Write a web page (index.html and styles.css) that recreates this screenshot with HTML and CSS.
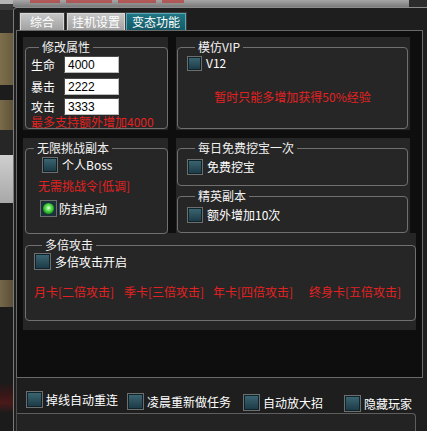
FILE: index.html
```html
<!DOCTYPE html>
<html>
    <head>
        <meta charset="utf-8" />
        <title>变态功能</title>
        <link rel="stylesheet" href="styles.css">
    </head>

    <body>
        <div class="screen">
            <!-- 左侧游戏画面 -->
            <div class="scene">
                <i class="s1"></i><i class="s2"></i><i class="s3"></i><i class="s4"></i><i class="s5"></i>
                <i class="s6"></i><i class="s7"></i><i class="s8"></i><i class="s9"></i><i class="s10"></i>
                <i class="s11"></i><i class="s12"></i>
            </div>

            <div class="main">
                <div class="topbar">
                    <span class="smear w1"></span><span class="smear w2"></span><span class="smear w3"></span>
                    <span class="smear w4"></span><span class="fill"></span><span class="topend"></span>
                </div>

                <div class="window">
                    <div class="tabs">
                        <span class="tab t1">综合</span>
                        <span class="tab t2">挂机设置</span>
                        <span class="tab t3 curr">变态功能</span>
                    </div>

                    <div class="panel">
                        <div class="row row1">
                            <div class="col col-l">
                                <fieldset class="grp g-attr">
                                    <legend>修改属性</legend>
                                    <div class="field f1"><label>生命</label><input type="text" value="4000" readonly></div>
                                    <div class="field f2"><label>暴击</label><input type="text" value="2222" readonly></div>
                                    <div class="field f3"><label>攻击</label><input type="text" value="3333" readonly></div>
                                    <p class="red">最多支持额外增加4000</p>
                                </fieldset>
                            </div>
                            <div class="col col-r">
                                <fieldset class="grp g-vip">
                                    <legend>模仿VIP</legend>
                                    <div class="chk"><span class="box"></span>V12</div>
                                    <p class="red tip">暂时只能多增加获得50%经验</p>
                                </fieldset>
                            </div>
                        </div>

                        <div class="row row2">
                            <div class="col col-l">
                                <fieldset class="grp g-boss">
                                    <legend>无限挑战副本</legend>
                                    <div class="chk"><span class="box"></span>个人Boss</div>
                                    <p class="red">无需挑战令[低调]</p>
                                    <div class="chk radio"><span class="led"><span class="dot"></span></span>防封启动</div>
                                </fieldset>
                            </div>
                            <div class="col col-r">
                                <fieldset class="grp g-dig">
                                    <legend>每日免费挖宝一次</legend>
                                    <div class="chk"><span class="box"></span>免费挖宝</div>
                                </fieldset>
                                <fieldset class="grp g-elite">
                                    <legend>精英副本</legend>
                                    <div class="chk"><span class="box"></span>额外增加10次</div>
                                </fieldset>
                            </div>
                        </div>

                        <div class="row3">
                            <fieldset class="grp g-multi">
                                <legend>多倍攻击</legend>
                                <div class="chk"><span class="box"></span>多倍攻击开启</div>
                                <p class="red cards">
                                    <span class="c1">月卡[二倍攻击]</span><span class="c2">季卡[三倍攻击]</span><span class="c3">年卡[四倍攻击]</span><span class="c4">终身卡[五倍攻击]</span>
                                </p>
                            </fieldset>
                        </div>
                    </div>

                    <div class="bottom">
                        <div class="options">
                            <div class="chk opt o1"><span class="box"></span>掉线自动重连</div>
                            <div class="chk opt o2"><span class="box"></span>凌晨重新做任务</div>
                            <div class="chk opt o3"><span class="box"></span>自动放大招</div>
                            <div class="chk opt o4"><span class="box"></span>隐藏玩家</div>
                        </div>
                        <div class="lower"></div>
                    </div>
                </div>
            </div>
        </div>
    </body>
</html>
```

FILE: styles.css
```css
*{margin:0;padding:0;box-sizing:border-box;}
body{width:427px;height:431px;overflow:hidden;background:#1a1a1a;color:#fff;font:12px/14px "Noto Sans CJK SC","Liberation Sans",sans-serif;}

.screen{display:flex;height:431px;}

/* 左侧背景 */
.scene{width:13px;flex:none;display:flex;flex-direction:column;}
.scene i{display:block;}
.scene .s1{height:4px;background:#b4b4b4;}
.scene .s2{height:6px;background:#3a3a3a;}
.scene .s3{height:23px;background:#262626;}
.scene .s4{height:52px;background:linear-gradient(90deg,#7d6e4c,#6a5d40);}
.scene .s5{height:15px;background:#1c1c1c;}
.scene .s6{height:30px;background:linear-gradient(90deg,#7a6b49,#5e5238);}
.scene .s7{height:25px;background:#262626;}
.scene .s8{height:48px;background:linear-gradient(#cfcfcf,#a8a8a8);}
.scene .s9{height:77px;background:#1d1d1d;}
.scene .s10{height:27px;background:linear-gradient(90deg,#75674a,#5a4f39);}
.scene .s11{height:76px;background:#1b1b1b;}
.scene .s12{height:48px;background:linear-gradient(#1b1b1b 0,#3a1616 12px,#4a1a1a 20px,#1b1b1b 30px);}

.main{flex:1;min-width:0;display:flex;flex-direction:column;}
.topbar{height:7px;display:flex;align-items:flex-start;padding-left:17px;background:linear-gradient(#a6a6a6,#7a7a7a);}
.topbar .smear{height:3px;margin-right:6px;background:#b83a3a;opacity:.7;}
.topbar .w1{width:30px;}
.topbar .w2{width:46px;}
.topbar .w3{width:38px;}
.topbar .w4{width:22px;}
.topbar .fill{flex:1;}
.topbar .topend{width:18px;height:7px;background:#2c2c2c;}

.window{flex:1;display:flex;flex-direction:column;border-top:1px solid #8c8c8c;border-left:1px solid #7a7a7a;border-top-left-radius:4px;background:#1e1e1e;padding-left:2px;}

/* 选项卡 */
.tabs{display:flex;height:17px;margin-top:5px;padding-left:4px;}
.tab{height:17px;border:1px solid #d8d8d8;border-bottom:none;background:linear-gradient(#c6c6c6,#a2a2a2);text-align:center;line-height:15px;box-shadow:0 0 0 1px #3a3a3a;}
.tab.t1{width:44px;margin-right:3px;}
.tab.t2{width:58px;margin-right:1px;}
.tab.t3{width:60px;}
.tab.curr{border-color:#5aa8b6;background:linear-gradient(#207584,#145a66);}

.panel{width:407px;height:348px;border:1px solid #6a6a6a;background:#0e0e0e;padding:6px 0 0 6px;}
.row{display:flex;gap:8px;}
.row1{height:93px;margin-bottom:8px;}
.row2{height:95px;}
.col{background:#262626;padding-top:3px;}
.col-l{width:145px;padding-left:2px;}
.col-r{width:234px;padding-left:1px;}
.row3{width:393px;height:97px;background:#262626;padding:5px 0 0 2px;}

/* 分组框 */
.grp{border:1px solid #707070;border-radius:4px;min-width:0;}
.grp legend{margin-left:8px;padding:0 3px;line-height:14px;color:#f2f2f2;}
.g-attr{width:143px;height:89px;padding:2px 0 0 5px;}
.g-vip{width:231px;height:89px;padding:1px 0 0 9px;}
.g-boss{width:143px;height:93px;padding:2px 0 0 0;}
.g-dig{width:231px;height:45px;padding:4px 0 0 9px;}
.g-elite{width:231px;height:44px;margin-top:3px;padding:4px 0 0 9px;}
.g-multi{width:391px;height:83px;padding:1px 0 0 8px;}

.red{color:#e22222;}

.field{display:flex;align-items:center;height:17px;}
.field.f1{margin-bottom:5px;}
.field.f2{margin-bottom:3px;}
.field.f3{margin-bottom:1px;}
.field label{width:33px;}
.field input{width:55px;height:17px;border:1px solid #4a4a4a;border-right-color:#bbb;border-bottom-color:#bbb;background:#fff;color:#000;padding:0 3px;font:12px "Liberation Sans",sans-serif;outline:none;}
.g-attr .red{line-height:12px;}

.chk{display:flex;align-items:center;gap:4px;height:16px;}
.box{width:16px;height:16px;flex:none;border:1px solid #6e6e6e;background:linear-gradient(#3d6874,#1a3844);box-shadow:inset 0 0 0 1px #0f232a;}
.g-vip .box{width:15px;height:15px;}
.tip{margin-top:19px;text-align:center;padding-right:9px;}

.g-boss .chk{margin-left:16px;}
.g-boss .red{margin:6px 0 0 12px;}
.g-boss .radio{height:17px;margin:7px 0 0 14px;gap:2px;}
.led{width:17px;height:17px;display:flex;align-items:center;justify-content:center;border:1px solid #6e6e6e;background:#1b3038;}
.led .dot{width:11px;height:11px;border-radius:50%;background:radial-gradient(circle at 50% 45%,#e4ffdc 0,#6be663 30%,#1fa51f 65%,#0d4812 100%);}

.g-multi .chk{height:17px;}
.g-multi .box{width:17px;height:17px;}
.cards{display:flex;margin-top:15px;}
.cards span{display:inline-block;}
.cards .c1{width:84px;margin-right:6px;}
.cards .c2{width:83px;margin-right:6px;}
.cards .c3{width:84px;margin-right:12px;}
.cards .c4{width:96px;}

/* 底部选项 */
.bottom{flex:1;display:flex;flex-direction:column;border-left:1px solid #4c4c4c;}
.options{display:flex;align-items:flex-start;height:35px;padding:13px 0 0 9px;}
.opt{height:17px;gap:3px;}
.opt .box{width:17px;height:17px;}
.options .o2{margin:2px 0 0 9px;}
.options .o3{margin:3px 0 0 12px;}
.options .o4{margin:4px 0 0 21px;}
.lower{width:399px;flex:1;border-top:1px solid #5e5e5e;border-right:1px solid #5e5e5e;border-top-right-radius:4px;background:#232323;}
```
